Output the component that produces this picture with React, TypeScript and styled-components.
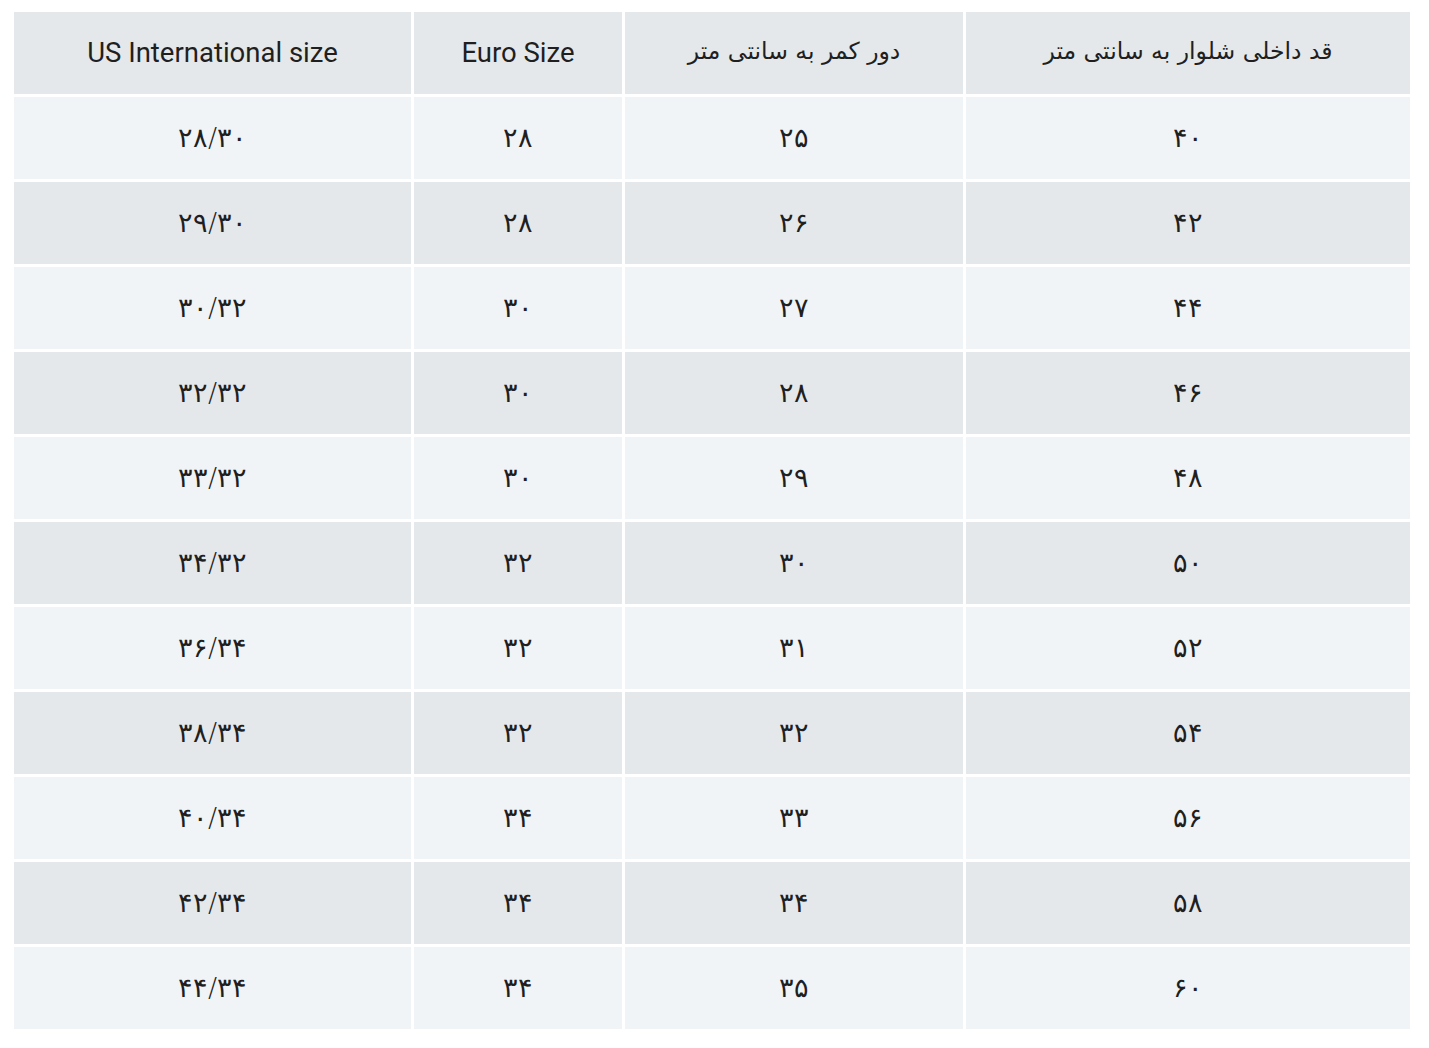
import React from "react";
import styled, { createGlobalStyle } from "styled-components";

const Global = createGlobalStyle`
  html, body { margin: 0; padding: 0; background: #ffffff; }
  body { font-family: Roboto, "DejaVu Sans", "Noto Sans", sans-serif; }
`;

const Page = styled.div`
  padding: 12px 19px 0 14px;
`;

const Grid = styled.div`
  direction: rtl;
  display: grid;
  grid-template-columns: 444px 338px 208px 397px;
  grid-auto-rows: 82px;
  gap: 3px;
  width: 1396px;
`;

const Cell = styled.div<{ $tone: "head" | "light" | "dark" }>`
  display: flex;
  align-items: center;
  justify-content: center;
  background: ${(p) => (p.$tone === "light" ? "#f0f4f7" : "#e5e8eb")};
  color: #1f1f1f;
  box-sizing: border-box;
`;

const HeadText = styled.span<{ $latin?: boolean }>`
  font-family: ${(p) =>
    p.$latin ? 'Roboto, "DejaVu Sans", sans-serif' : '"DejaVu Sans", Roboto, sans-serif'};
  font-size: ${(p) => (p.$latin ? "27.5px" : "23.5px")};
  margin-top: ${(p) => (p.$latin ? "-2px" : "-4px")};
`;

const Value = styled.span`
  direction: ltr;
  unicode-bidi: isolate;
  font-family: "DejaVu Sans", Roboto, sans-serif;
  font-weight: 200;
  font-size: 27px;
  margin-top: -2px;
`;

const headers: { text: string; latin?: boolean }[] = [
  { text: "قد داخلی شلوار به سانتی متر" },
  { text: "دور کمر به سانتی متر" },
  { text: "Euro Size", latin: true },
  { text: "US International size", latin: true },
];

const rows: string[][] = [
  ["۴۰", "۲۵", "۲۸", "۲۸/۳۰"],
  ["۴۲", "۲۶", "۲۸", "۲۹/۳۰"],
  ["۴۴", "۲۷", "۳۰", "۳۰/۳۲"],
  ["۴۶", "۲۸", "۳۰", "۳۲/۳۲"],
  ["۴۸", "۲۹", "۳۰", "۳۳/۳۲"],
  ["۵۰", "۳۰", "۳۲", "۳۴/۳۲"],
  ["۵۲", "۳۱", "۳۲", "۳۶/۳۴"],
  ["۵۴", "۳۲", "۳۲", "۳۸/۳۴"],
  ["۵۶", "۳۳", "۳۴", "۴۰/۳۴"],
  ["۵۸", "۳۴", "۳۴", "۴۲/۳۴"],
  ["۶۰", "۳۵", "۳۴", "۴۴/۳۴"],
];

export default function App() {
  return (
    <>
      <Global />
      <Page>
        <Grid>
          {headers.map((h) => (
            <Cell key={h.text} $tone="head">
              <HeadText $latin={h.latin}>{h.text}</HeadText>
            </Cell>
          ))}
          {rows.map((r, i) =>
            r.map((v, j) => (
              <Cell key={`${i}-${j}`} $tone={i % 2 === 0 ? "light" : "dark"}>
                <Value>{v}</Value>
              </Cell>
            ))
          )}
        </Grid>
      </Page>
    </>
  );
}
